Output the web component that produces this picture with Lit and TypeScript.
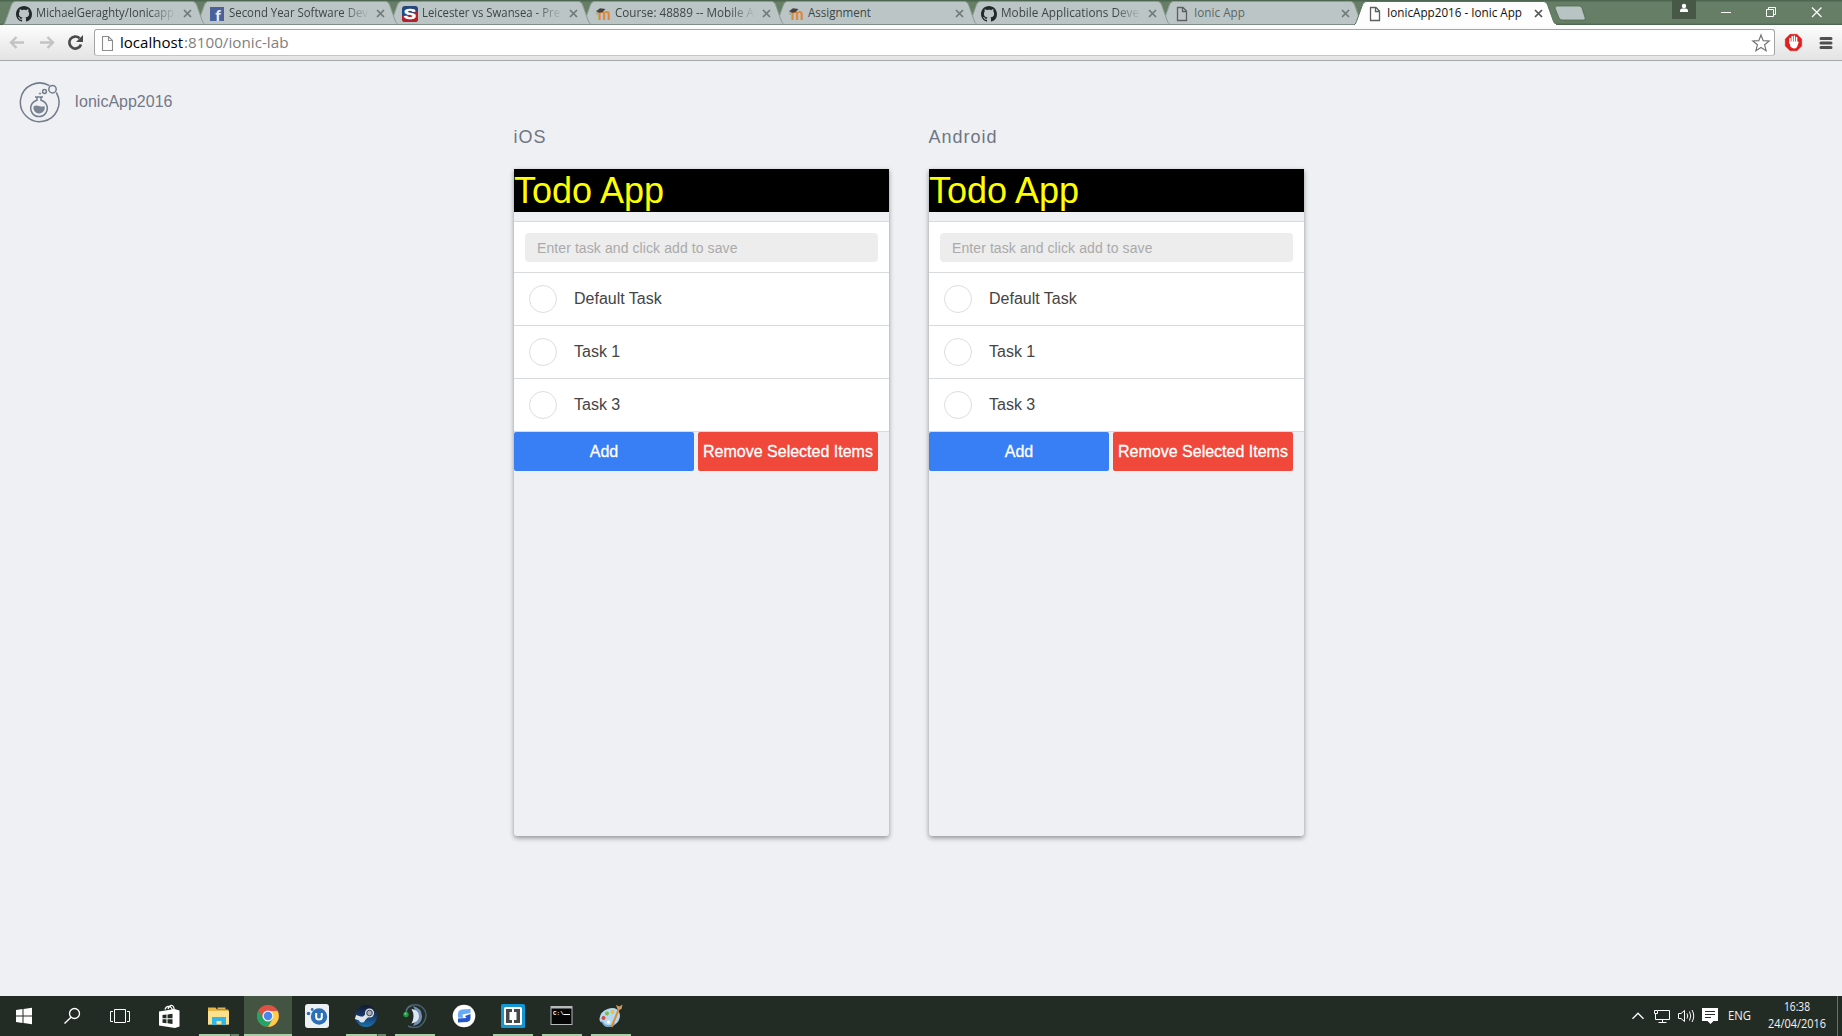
import { LitElement, html, css, svg, nothing, type TemplateResult } from "lit";
import { customElement, property } from "lit/decorators.js";

const UI_FONT = "'Open Sans','Noto Sans',sans-serif";

/** One line of UI text, condensed to a known advance width. */
const fitted = (text: string, width: number, size: number, cls = "") => html`
  <svg class="fit ${cls}" width=${width} height=${size + 8} viewBox="0 0 ${width} ${size + 8}">
    <text x="0" y=${size + 1} font-family=${UI_FONT} font-size=${size} textLength=${width} lengthAdjust="spacingAndGlyphs">${text}</text>
  </svg>`;

const octocat = svg`<path fill="#22292a" d="M8 0C3.58 0 0 3.58 0 8c0 3.54 2.29 6.53 5.47 7.59.4.07.55-.17.55-.38 0-.19-.01-.82-.01-1.49-2.01.37-2.53-.49-2.69-.94-.09-.23-.48-.94-.82-1.13-.28-.15-.68-.52-.01-.53.63-.01 1.08.58 1.23.82.72 1.21 1.87.87 2.33.66.07-.52.28-.87.51-1.07-1.78-.2-3.64-.89-3.64-3.95 0-.87.31-1.59.82-2.15-.08-.2-.36-1.02.08-2.12 0 0 .67-.21 2.2.82.64-.18 1.32-.27 2-.27.68 0 1.36.09 2 .27 1.53-1.04 2.2-.82 2.2-.82.44 1.1.16 1.92.08 2.12.51.56.82 1.27.82 2.15 0 3.07-1.87 3.75-3.65 3.95.29.25.54.73.54 1.48 0 1.07-.01 1.93-.01 2.2 0 .21.15.46.55.38A8.013 8.013 0 0016 8c0-4.42-3.58-8-8-8z"/>`;
const facebook = svg`<rect x="1" y="1" width="14" height="14" fill="#4a619c"/><text x="6.2" y="15" font-family="Lato" font-weight="900" font-size="15.5" fill="#e8eef2">f</text>`;
const sports = svg`<rect width="16" height="16" rx="3" fill="#274679"/><path d="M0 10Q8 9 16 5V13a3 3 0 0 1-3 3H3a3 3 0 0 1-3-3Z" fill="#b4202f"/><text x="1.8" y="13.2" font-family="Liberation Sans" font-weight="bold" font-size="15" textLength="12.4" lengthAdjust="spacingAndGlyphs" fill="#fff" stroke="#fff" stroke-width=".5">S</text>`;
const moodle = svg`<text x="2.8" y="14" font-family="Lato" font-weight="900" font-size="17" textLength="13" lengthAdjust="spacingAndGlyphs" fill="#dd8a3c">m</text><path d="M1 5.2 5 2.2 10.5 3 7.5 6.2 4 6.8Z" fill="#44433f"/><path d="M2 5.5V9" stroke="#8f8878" stroke-width=".7"/>`;
const sheet = svg`<path d="M3.5 1.5H9L12.5 5V14.5H3.5Z M8.500 1.5V5.500H12.5" fill="none" stroke="#5c6060" stroke-width="1.3"/>`;

interface Tab { icon: TemplateResult; title: string; width: number; fade?: boolean; active?: boolean; dim?: boolean }
const TABS: Tab[] = [
  { icon: octocat, title: "MichaelGeraghty/Ionicapp", width: 138, fade: true },
  { icon: facebook, title: "Second Year Software Dev", width: 139, fade: true },
  { icon: sports, title: "Leicester vs Swansea - Pre", width: 138, fade: true },
  { icon: moodle, title: "Course: 48889 -- Mobile A", width: 139, fade: true },
  { icon: moodle, title: "Assignment", width: 63 },
  { icon: octocat, title: "Mobile Applications Deve", width: 138, fade: true },
  { icon: sheet, title: "Ionic App", width: 51, dim: true },
  { icon: sheet, title: "IonicApp2016 - Ionic App", width: 135, active: true },
];

@customElement("browser-chrome")
class BrowserChrome extends LitElement {
  static styles = css`
    :host { display: block; height: 61px; flex: none; }
    .fit { display: block; overflow: visible; }
    .strip { display: flex; height: 25px; background: linear-gradient(#4c6650 0 1px, #657e65 2px 23px, #566c56 24px, #48604a 25px); padding-left: 3px; }
    .tab { display: grid; width: 204px; height: 25px; margin-right: -11px; flex: none; }
    .tab > * { grid-area: 1 / 1; }
    .row { display: flex; align-items: center; height: 25px; padding: 1px 0 0 13px; }
    .glyph { width: 16px; height: 16px; flex: none; overflow: visible; }
    .name { margin-left: 4px; width: 139px; height: 20px; fill: #3d4644; }
    .fade .name { mask-image: linear-gradient(90deg, #000 82%, transparent 101%); }
    .dim .name { fill: #5c6664; }
    .active .name { fill: #111; }
    .close { width: 9px; height: 9px; margin-left: 7.5px; }
    .plus { width: 32px; height: 16px; margin: 5px 0 0 7px; }
    .frame { margin-left: auto; display: flex; align-items: flex-start; margin-right: 8px; }
    .user { width: 24px; height: 19px; background: #475847; }
    .frame .win { width: 46px; height: 25px; }
    .bar { display: flex; align-items: center; height: 35px; border-bottom: 1px solid #a6a8a8; background: linear-gradient(#fdfdfd, #e3e3e3); }
    .nav { width: 17px; height: 17px; margin-right: 12px; }
    .nav.first { margin-left: 9px; }
    .nav.last { margin-right: 0; }
    .omni { display: flex; align-items: center; width: 1681px; height: 27px; box-sizing: border-box; margin: 0 9px 0 10px; border: 1px solid #a4a5a5; border-bottom-color: #c4c4c4; border-radius: 3px; background: #fff; padding: 0 3px 0 4px; }
    .doc { width: 16px; height: 18px; margin-right: 5px; }
    .omni .fit { margin-top: 2px; }
    .url { fill: #000; }
    .path { fill: #808080; margin-left: 1px; }
    .star { margin-left: auto; width: 20px; height: 20px; }
    .menu { margin-left: 16px; }
  `;
  render() {
    return html`
      <div class="strip">
        ${TABS.map((t, i) => html`
          <div class="tab ${t.active ? "active" : ""} ${t.fade ? "fade" : ""} ${t.dim ? "dim" : ""}" style="z-index:${t.active ? 20 : 10 - i}">
            <svg width="204" height="25" viewBox="0 0 204 25">
              <path d="M0 25 C2 24 2 22 3 20 L8 6 C9 3 10 1.5 13 1.5 H189 C192 1.5 193 3 194 6 L199 20 C200 23 201 24 203 25Z" fill=${t.active ? "#fdfdfd" : "#bbc5c6"} stroke=${t.active ? "#5b725b" : "#8b9b92"} stroke-width="1"/>
              ${t.active ? svg`<rect x="1" y="24" width="201" height="1" fill="#fdfdfd"/>` : svg`<rect y="24" width="203" height="1" fill="#7f8c86"/>`}
            </svg>
            <div class="row">
              <svg class="glyph" viewBox="0 0 16 16">${t.icon}</svg>
              <div class="name">${fitted(t.title, t.width, 12)}</div>
              <svg class="close" viewBox="0 0 9 9"><path d="M1 1 8 8M8 1 1 8" stroke=${t.active ? "#555" : "#6f7977"} stroke-width="1.7"/></svg>
            </div>
          </div>`)}
        <svg class="plus" viewBox="0 0 32 16"><path d="M1 3Q1 1 3 1H25Q27 1 28 3L31.200 13Q31.500 15 29.500 15H8Q6 15 5 13Z" fill="#b8c3c4" stroke="#52694f" stroke-width=".8"/></svg>
        <div class="frame">
          <svg class="user" viewBox="0 0 24 19"><circle cx="12" cy="6" r="2.2" fill="#fff"/><path d="M8 12V10.6Q8 9 10 8.6H14Q16 9 16 10.6V12Z" fill="#fff"/></svg>
          <svg class="win" viewBox="0 0 46 25"><path d="M25 12.5H35" stroke="#fff"/></svg>
          <svg class="win" viewBox="0 0 46 25"><path d="M24.5 9.500H31.500V16.500H24.500ZM26.500 9.500V7.500H33.500V14.500H31.500" fill="none" stroke="#fff"/></svg>
          <svg class="win" viewBox="0 0 46 25"><path d="M24 7.500 33.500 17M33.500 7.500 24 17" stroke="#fff" stroke-width="1.2"/></svg>
        </div>
      </div>
      <div class="bar">
        <svg class="nav first" viewBox="0 0 17 17"><path d="M15 8.500H2.500M7.500 3 2 8.500 7.500 14" fill="none" stroke="#c3c3c3" stroke-width="2.400"/></svg>
        <svg class="nav" viewBox="0 0 17 17"><path d="M2 8.500H14.500M9.500 3 15 8.500 9.500 14" fill="none" stroke="#c3c3c3" stroke-width="2.400"/></svg>
        <svg class="nav last" viewBox="0 0 17 17"><path d="M14 10.500A6 6 0 1 1 12.500 4.200" fill="none" stroke="#4a4a4a" stroke-width="2.700"/><path d="M16 1V8H9Z" fill="#4a4a4a"/></svg>
        <div class="omni">
          <svg class="doc" viewBox="0 0 16 18"><path d="M3.500 2.500H9.500L13.500 6.500V16.500H3.500ZM9.500 2.500V6.500H13.500" fill="#fdfdfd" stroke="#8c8c8c" stroke-width="1.100"/></svg>
          ${fitted("localhost", 63, 15, "url")}${fitted(":8100/ionic-lab", 104.5, 15, "path")}
          <svg class="star" viewBox="0 0 20 20"><path d="M10 2 12.200 7.600 18.200 8 13.600 11.800 15.100 17.700 10 14.400 4.900 17.700 6.400 11.800 1.800 8 7.800 7.600Z" fill="#fff" stroke="#747474" stroke-width="1.200"/></svg>
        </div>
        <svg width="19" height="19" viewBox="0 0 19 19"><path d="M6 1H13L18 6V13L13 18H6L1 13V6Z" fill="#e2201f" stroke="#b9a9a9" stroke-width=".5"/><path d="M6 10V5.500M8.200 8.500V3.500M10.400 8.500V3.300M12.600 9V4.500" stroke="#fff" stroke-width="1.500" stroke-linecap="round"/><path d="M5.300 8.500H13.400L14.800 9 13 14Q12 15.500 10 15.500T6.500 13.500Z" fill="#fff"/></svg>
        <svg class="menu" width="14" height="14" viewBox="0 0 14 14"><path d="M2 2.500H12M2 7H12M2 11.500H12" stroke="#505050" stroke-width="3" stroke-linecap="round"/></svg>
      </div>`;
  }
}

@customElement("todo-device")
class TodoDevice extends LitElement {
  @property() platform = "";
  static styles = css`
    :host { display: block; width: 375px; font-family: "Liberation Sans", Arial, sans-serif; }
    .label { margin: 0 0 0 -.6px; height: 44px; line-height: 24px; font-size: 18px; font-weight: 400; letter-spacing: 1px; color: #6e7683; }
    .screen { height: 667px; overflow: hidden; border-radius: 0 0 3px 3px; background: #eff0f4; box-shadow: 0 2px 5px rgba(0,0,0,.4); }
    .header { height: 43px; line-height: 43px; background: #000; color: #ff0; font-size: 36px; font-weight: 400; margin: 0 0 9px; }
    .entry { height: 39px; border-top: 1px solid #d9dadd; background: #fff; padding: 11px 11px 0; }
    .field { height: 29px; line-height: 31px; padding-left: 12px; font-size: 14px; letter-spacing: .09px; color: #aaa; border-radius: 4px; background: #ededed; }
    .item { display: flex; align-items: center; height: 52px; border-top: 1px solid #d9dadd; background: #fff; color: #444; font-size: 16px; }
    .check { box-sizing: border-box; width: 28px; height: 28px; margin: 0 17px 0 15px; border: 1px solid #ddd; border-radius: 50%; }
    .actions { display: flex; gap: 4px; height: 39px; border-top: 1px solid #d9dadd; font-size: 16px; color: #fff; text-align: center; line-height: 39px; }
    .btn { width: 180px; border-radius: 2px; background: #387ef5; white-space: nowrap; -webkit-text-stroke: .3px #fff; }
    .danger { background: #f0483b; }
  `;
  render() {
    return html`
      <h2 class="label">${this.platform}</h2>
      <div class="screen">
        <h1 class="header">Todo App</h1>
        <div class="entry"><div class="field">Enter task and click add to save</div></div>
        ${["Default Task", "Task 1", "Task 3"].map((t) => html`<div class="item"><span class="check"></span>${t}</div>`)}
        <div class="actions"><div class="btn">Add</div><div class="btn danger">Remove Selected Items</div></div>
      </div>`;
  }
}

interface App { icon: TemplateResult; run?: "one" | "many"; active?: boolean }
const APPS: App[] = [
  { icon: svg`<path d="M7 5.500Q8 2 11 2.500 14 3 14.500 6.500M10 5Q11.500 1 14 1.500 16.500 2.500 16 6.500" fill="none" stroke="#fff" stroke-width="1.200"/><path d="M1 7.500 16.500 5 21.500 6.500V22.500L17 24 1 21.500Z" fill="#fff"/><path d="M4.500 11 8.500 10.500V14.300H4.500ZM9.500 10.400 14.500 9.700V14.300H9.500ZM4.500 15.300H8.500V19.200L4.500 18.700ZM9.500 15.300H14.500V20L9.500 19.300Z" fill="#222b22"/>` },
  { icon: svg`<path d="M1 3.500H8.500L10 5.500H21.500V20.500H1Z" fill="#e8b74a"/><path d="M1 7H22V20.500H1Z" fill="#fbe08e"/><path d="M10.500 3.500H18.500V5.500H10.500Z" fill="#d9b560"/><path d="M5 21V13H19V21H14.500V17H9.500V21Z" fill="#32b6e8"/>`, run: "many" },
  { icon: svg`<circle cx="12" cy="12" r="11" fill="#de5246"/><path d="M12 12 2.500 6.500A11 11 0 0 0 12 23L17 15Z" fill="#25a366"/><path d="M12 12 16.800 14.800 12 23A11 11 0 0 0 21.500 6.800H12Z" fill="#fccd48"/><path d="M12 7H21.500A11 11 0 0 0 2.500 6.500L7.500 14.600Z" fill="#de5246"/><circle cx="12" cy="12" r="5.500" fill="#f2f2ee"/><circle cx="12" cy="12" r="4.200" fill="#4887ef"/>`, run: "one", active: true },
  { icon: svg`<rect width="24" height="24" rx="3" fill="#eef1f3"/><circle cx="14" cy="12.500" r="8.200" fill="#2d70b8"/><circle cx="3.500" cy="9.500" r="1.800" fill="#2d70b8"/><circle cx="7.200" cy="5.500" r="1.400" fill="#2d70b8"/><path d="M11.200 9V13Q11.200 15.500 14 15.500T16.800 13V9" fill="none" stroke="#fff" stroke-width="2"/>` },
  { icon: svg`<defs><linearGradient id="st" x2="0" y2="1"><stop stop-color="#12192f"/><stop offset=".5" stop-color="#173a6b"/><stop offset="1" stop-color="#1b72ad"/></linearGradient></defs><circle cx="12" cy="12" r="11" fill="url(#st)"/><path d="M1.500 13 9 15.500 14.500 10" stroke="#e1e6eb" stroke-width="4" fill="none"/><circle cx="15.500" cy="9" r="4.600" fill="#d9dee4"/><circle cx="15.500" cy="9" r="2.800" fill="#a7b0ba" stroke="#334" stroke-width=".9"/><circle cx="8" cy="15.500" r="3" fill="#dfe4e8"/>`, run: "many" },
  { icon: svg`<path d="M5 3Q11-1 17.500 2 23.500 6 23 12 22 20 15 23 9 24 5 22" fill="none" stroke="#48627c" stroke-width="1.400"/><path d="M10 2Q18.500 4 19 12T10 22L15 12Z" fill="#7190b3"/><path d="M8.500 5Q16 6 16 12T8.500 19.500Q12.500 12 8.500 5Z" fill="#dce7f3"/><path d="M3 8Q4 2.500 8.500 2" stroke="#54707f" stroke-width="1.700" fill="none"/><circle cx="3" cy="10.500" r="2.700" fill="#239643"/><circle cx="2.500" cy="9.800" r="1" fill="#6fde86"/>`, run: "one" },
  { icon: svg`<circle cx="12" cy="12" r="11.300" fill="#fff"/><path d="M18.500 5 10 5.500Q6 6 6 10V13.500L11 14 10.500 10.500 18.500 9Z" fill="#6aa9f6"/><path d="M6 18.500 15 18Q18.500 17.500 18.500 14V10L13 12 14.500 14 6 14.500Z" fill="#2457cf"/>` },
  { icon: svg`<rect width="24" height="24" rx="1.500" fill="#1597d4"/><rect x="3" y="3" width="18" height="18" rx="1.500" fill="#fff"/><path d="M11 5H5V19H11V16H8.500V8H11ZM13 5H19V19H13V16H15.500V8H13Z" fill="#474747"/>`, run: "one" },
  { icon: svg`<rect x=".5" y="2" width="22" height="19" fill="#b8babb"/><rect x="1.500" y="4.500" width="20" height="15.500" fill="#050505"/><text x="3" y="11" font-family="Liberation Mono" font-weight="bold" font-size="6" fill="#fff">C:\\</text><path d="M13.500 10.500H20" stroke="#fff"/>`, run: "one" },
  { icon: svg`<path d="M.5 16Q.5 8 8.500 5 17.500 2 20.500 9 22.500 16 15.500 21 8.500 25 4.500 21 4.500 18 1.500 18Z" fill="#b5d8ee"/><path d="M1.500 17Q4.500 17 5.500 20 10.500 23 16.500 19L15.500 21Q8.500 25 4.500 21Z" fill="#6ba5d0"/><circle cx="4.500" cy="14" r="2" fill="#e2443b"/><circle cx="8" cy="9.500" r="1.900" fill="#7cbd3d"/><circle cx="13.500" cy="8" r="1.900" fill="#f0bf34"/><circle cx="9.500" cy="18" r="1.700" fill="#f6fafc"/><path d="M19.500 6 12.500 23" stroke="#dd8b35" stroke-width="2"/><path d="M17 1 20.500 2.500 23.500 .500 22.500 5 19 6.500Z" fill="#c99b66"/>`, run: "one" },
];

@customElement("task-bar")
class TaskBar extends LitElement {
  static styles = css`
    :host { display: flex; flex: none; height: 40px; background: #232c24; }
    .sys { width: 48px; height: 40px; flex: none; }
    .apps { display: flex; gap: 1px; margin-left: 2px; }
    .app { display: flex; flex-direction: column; align-items: center; width: 48px; height: 40px; }
    .app.active { background: #445443; }
    .app svg { width: 24px; height: 24px; margin: 8px 0 6px; }
    .line { display: flex; width: 40px; height: 2px; background: #a5cca2; }
    .many { background: linear-gradient(90deg, #a5cca2 31px, #3c4a3c 31px 32px, #6b866b 32px); }
    .active .line { width: 48px; }
    .tray { display: flex; align-items: center; height: 40px; margin-left: auto; fill: #f4f4f4; }
    .fit { display: block; overflow: visible; }
    .lang { margin-top: 2px; }
    .clock { display: flex; flex-direction: column; align-items: center; width: 58px; margin: -3px 11px 0 17px; }
    .clock .fit { height: 17px; }
    .peek { width: 1px; height: 40px; background: #687068; margin-right: 4px; }
  `;
  render() {
    return html`
      <svg class="sys" viewBox="0 0 48 40"><path d="M16 14 22.500 13V19.500H16ZM23.500 12.900 32 11.800V19.500H23.500ZM16 20.500H22.500V27L16 26.100ZM23.500 20.500H32V28.200L23.500 27.100Z" fill="#fff"/></svg>
      <svg class="sys" viewBox="0 0 48 40"><circle cx="26.500" cy="17.500" r="5" fill="none" stroke="#fff" stroke-width="1.300"/><path d="M23 21.200 16.500 27.500" stroke="#fff" stroke-width="1.400"/></svg>
      <svg class="sys" viewBox="0 0 48 40"><path d="M18.500 13.500H29.500V26.500H18.500ZM17 15.500H14.500V25.500H17M31 15.500H33.500V25.500H31" fill="none" stroke="#fff"/></svg>
      <div class="apps">
        ${APPS.map((a) => html`<div class="app ${a.active ? "active" : ""}"><svg viewBox="0 0 24 24">${a.icon}</svg>${a.run ? html`<div class="line ${a.run}"></div>` : nothing}</div>`)}
      </div>
      <div class="tray">
        <svg width="20" height="40" viewBox="0 0 20 40"><path d="M2.500 22.800 8 17.200 13.500 22.800" fill="none" stroke="#fff" stroke-width="1.300"/></svg>
        <svg width="26" height="40" viewBox="0 0 26 40"><path d="M8 14.500H19.500V23.500H5.500V18M12.500 23.500V26.500M8.500 26.500H16.500M4.500 14.500H7.500V17.500H4.500Z" fill="none" stroke="#fff"/></svg>
        <svg width="24" height="40" viewBox="0 0 24 40"><path d="M2.500 17.500H5L8.500 14.500V25.500L5 22.500H2.500Z" fill="none" stroke="#fff"/><path d="M11 17.500Q12.500 20 11 22.500M13.500 15.500Q16 20 13.500 24.500M16 14Q19.500 20 16 26" fill="none" stroke="#fff"/></svg>
        <svg width="28" height="40" viewBox="0 0 28 40"><path d="M2 12H18V25H13.500L10.500 28 7.500 25H2Z" fill="#fff"/><path d="M5 15.500H15M5 18.500H15M5 21.500H11" stroke="#232c24"/></svg>
        ${fitted("ENG", 23, 12, "lang")}
        <div class="clock">
          <svg class="fit" width="26" height="17"><text y="13" font-family=${UI_FONT} font-size="12" textLength="26" lengthAdjust="spacingAndGlyphs">16:38</text></svg>
          <svg class="fit" width="58" height="17"><text y="13" font-family=${UI_FONT} font-size="12" textLength="58" lengthAdjust="spacingAndGlyphs">24/04/2016</text></svg>
        </div>
        <div class="peek"></div>
      </div>`;
  }
}

@customElement("app-root")
class AppRoot extends LitElement {
  static styles = css`
    :host { display: flex; flex-direction: column; height: 1036px; overflow: hidden; background: #eff0f4; font-family: "Liberation Sans", Arial, sans-serif; }
    .lab { flex: 1; min-height: 0; }
    .brand { display: flex; align-items: center; gap: 15px; height: 41px; padding: 20px 0 0 18.6px; font-size: 16px; color: #727987; }
    .mark { margin-top: 1px; }
    .devices { display: flex; gap: 40px; padding: 3px 0 0 514px; }
  `;
  render() {
    return html`
      <browser-chrome></browser-chrome>
      <main class="lab">
        <div class="brand">
          <svg class="mark" width="41" height="41" viewBox="0 0 41 41" fill="none" stroke="#727c8b" stroke-width="1.500">
            <path d="M30.500 3.700A19.300 19.300 0 1 0 37.300 10.500"/><circle cx="33.500" cy="7.200" r="3.700"/><circle cx="25.500" cy="9.500" r="1.900"/><circle cx="21" cy="11.500" r=".8" fill="#727c8b" stroke-width=".5"/>
            <path d="M16 15H24M18 15V18.200A8.300 8.300 0 1 0 22 18.200V15"/><path d="M14.500 24.500Q17 23 20 24T25.500 24A5.700 5.700 0 1 1 14.500 24.500Z" fill="#7b8492" stroke="none"/>
          </svg>
          <span>IonicApp2016</span>
        </div>
        <div class="devices"><todo-device platform="iOS"></todo-device><todo-device platform="Android"></todo-device></div>
      </main>
      <task-bar></task-bar>`;
  }
}
